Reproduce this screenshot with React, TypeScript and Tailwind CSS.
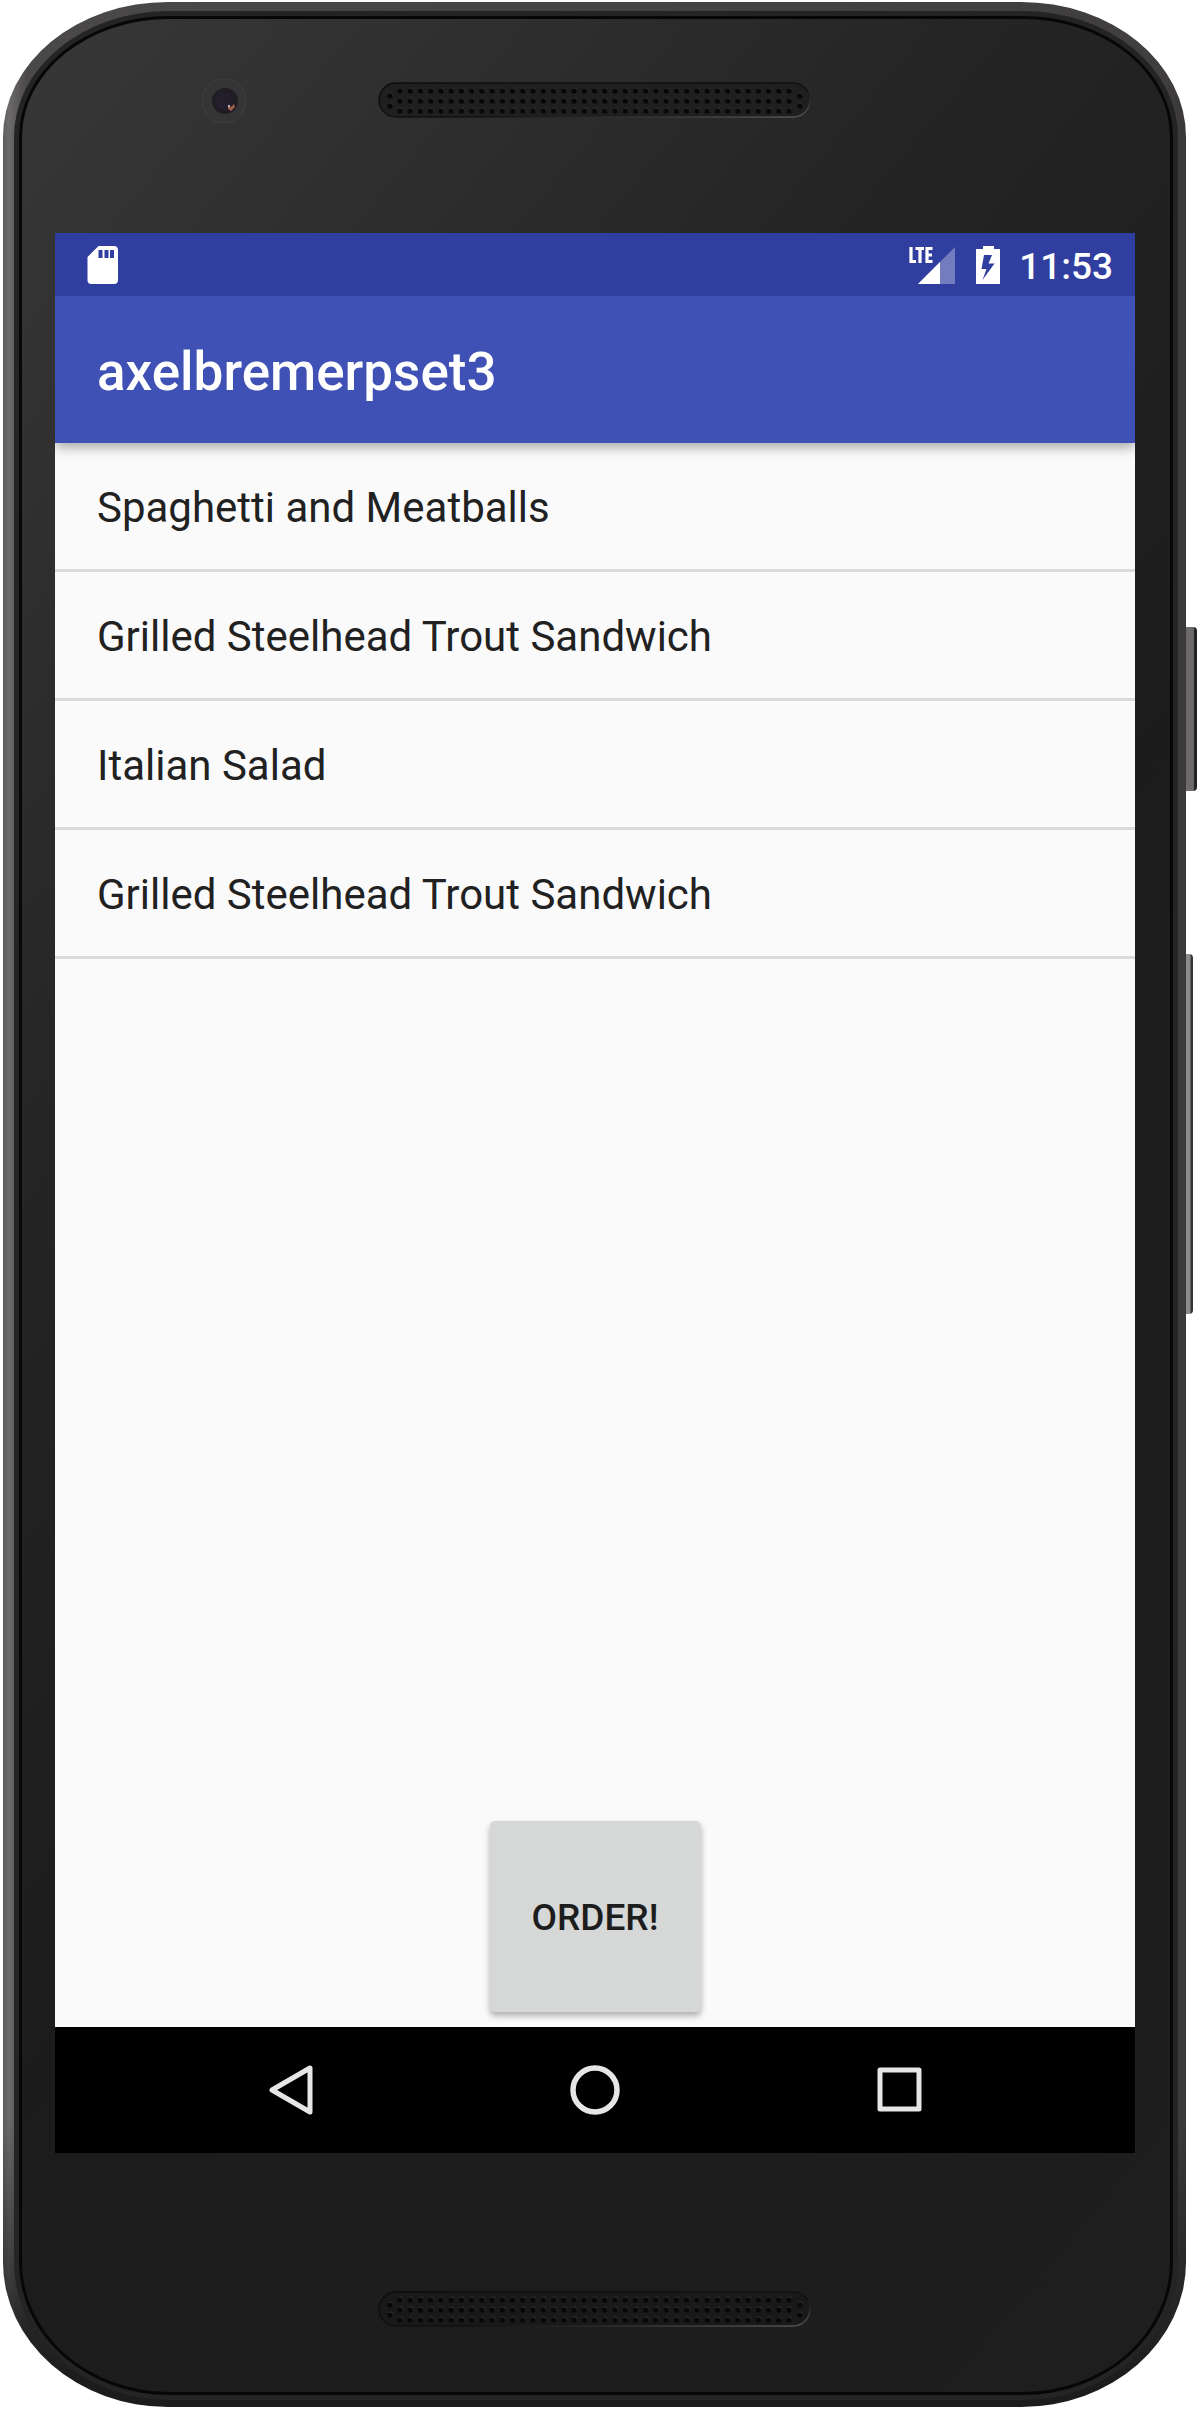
import React from "react";

const dishes = [
  "Spaghetti and Meatballs",
  "Grilled Steelhead Trout Sandwich",
  "Italian Salad",
  "Grilled Steelhead Trout Sandwich",
];

function Grille({ tone }: { tone: string }) {
  const holes: [number, number][] = [[12, 14], [12, 24], [422, 14], [422, 24]];
  for (let column = 0; column < 39; column++) {
    for (let row = 0; row < 3; row++) {
      holes.push([22 + column * 10.24, 9 + row * 10]);
    }
  }
  return (
    <svg className="h-9 w-[434px]" viewBox="0 0 434 36" aria-hidden="true">
      <defs>
        <linearGradient id={"edge" + tone.slice(1)} x1="0" y1="0" x2="1" y2="1">
          <stop offset="0" stopColor="#0c0c0c" />
          <stop offset="0.6" stopColor="#111" />
          <stop offset="1" stopColor="#555" />
        </linearGradient>
      </defs>
      <rect x="1" y="1" width="431" height="34" rx="17" fill={tone} stroke={"url(#edge" + tone.slice(1) + ")"} strokeWidth="1.5" />
      {holes.map(([x, y], i) => (
        <g key={i}>
          <circle cx={x + 0.5} cy={y - 1} r="2.5" fill="#303030" />
          <circle cx={x} cy={y} r="2.6" fill="#080808" />
        </g>
      ))}
    </svg>
  );
}

function Camera() {
  return (
    <svg className="h-12 w-12" viewBox="0 0 48 48" aria-hidden="true">
      <circle cx="24" cy="24" r="22" fill="#353535" stroke="#404040" />
      <circle cx="25" cy="24" r="13" fill="#1f1c24" />
      <circle cx="23" cy="23" r="9" fill="#231e2c" />
      <path d="M28 28l3 2 3-3 1 3-4 4-3-2z" fill="#a0604f" />
      <circle cx="29" cy="29" r="1" fill="#e0d2dc" />
    </svg>
  );
}

function StatusBar() {
  return (
    <div className="relative z-10 flex h-[63px] items-center bg-[#303f9f] pr-[22px] pl-8 text-white">
      <svg className="h-[39px] w-8" viewBox="0 0 32 39" aria-label="SD card" role="img">
        <path fillRule="evenodd" fill="#fff" d="M11.500 1H27a4 4 0 0 1 4 4V35a4 4 0 0 1-4 4H4.500a4 4 0 0 1-4-4V12zM11.500 5v8h4V5zM17.500 5v8h4V5zM23 5v8h4V5z" />
      </svg>
      <div className="ml-auto flex items-center">
        <div className="relative">
          <svg className="block h-[38px] w-[46px]" viewBox="0 0 46 38" aria-hidden="true">
            <path d="M46 1V38H9z" fill="#fff" opacity="0.32" />
            <path d="M31 16V38H9z" fill="#fff" />
          </svg>
          <svg className="absolute top-0 left-0 h-[18px] w-6" viewBox="0 0 24 18" role="img" aria-label="LTE">
            <path d="M2 1V15.500H7M6.500 2.500H15M11 2.500V17M23.500 2.500H18V15.500H23.500M18 9H23" fill="none" stroke="#fff" strokeWidth="3.2" />
          </svg>
        </div>
        <svg className="ml-[21px] h-[38px] w-6" viewBox="0 0 24 38" role="img" aria-label="Battery charging">
          <path fillRule="evenodd" fill="#fff" d="M7 0H18V3H24V38H0V3H7zM8 9L5.500 23H10.500L6.500 34L18.500 17.500H12.500L16 9z" />
        </svg>
        <time className="ml-[19px] pt-1 text-[37px] leading-none font-medium">11:53</time>
      </div>
    </div>
  );
}

function NavBar() {
  const button = "flex h-20 w-20 items-center justify-center";
  return (
    <nav className="flex h-[126px] items-center justify-center gap-56 bg-black">
      <button className={button} aria-label="Back">
        <svg className="h-14 w-14" viewBox="0 0 56 56" fill="none" stroke="#e6e6e6" strokeWidth="5" strokeLinejoin="round">
          <path d="M47 6V50L9 28z" />
        </svg>
      </button>
      <button className={button} aria-label="Home">
        <svg className="h-14 w-14" viewBox="0 0 56 56" fill="none" stroke="#e6e6e6" strokeWidth="5.500">
          <circle cx="28" cy="28" r="22" />
        </svg>
      </button>
      <button className={button} aria-label="Recent apps">
        <svg className="h-14 w-14" viewBox="0 0 56 56" fill="none" stroke="#e6e6e6" strokeWidth="5" strokeLinejoin="round">
          <rect x="9" y="8" width="39" height="39" />
        </svg>
      </button>
    </nav>
  );
}

export default function App() {
  return (
    <main className="bg-white pt-[2px] pr-3 pb-[2px] pl-[3px] font-[Roboto,sans-serif]">
      <div className="relative">
        <div className="absolute top-[625px] -right-[11px] h-[164px] w-3 rounded-r-sm bg-linear-to-r from-[#6b696b] from-70% to-[#222] to-80%" />
        <div className="absolute top-[952px] -right-[7px] h-[360px] w-2 rounded-r-sm bg-linear-to-r from-[#8b898a] from-60% to-[#333] to-80%" />
        <div className="relative rounded-t-[165px_135px] rounded-b-[165px_145px] bg-[linear-gradient(to_bottom,transparent_88%,#1c1c1c_99%),linear-gradient(to_right,#5e5c5d,#6c6a6a_6px,#4a4849_2%,#403e3f_98%,#3a3839)] pt-[9px] pr-2 pb-[7px] pl-[11px]">
          <div className="rounded-t-[155px_126px] rounded-b-[155px_138px] bg-[#242424] p-[5px]">
            <div className="rounded-t-[150px_121px] rounded-b-[150px_133px] bg-[#070707] p-[3px]">
              <div className="rounded-t-[147px_118px] rounded-b-[147px_130px] bg-[linear-gradient(130deg,#373738,#333334_8%,#242425_32%,#1c1c1d_55%,#1e1e1f)]">
                <header className="relative flex h-[214px] justify-center pt-[63px] pr-[2px]">
                  <div className="absolute top-[58px] left-[178px]">
                    <Camera />
                  </div>
                  <Grille tone="#1f1f1f" />
                </header>
                <section className="mr-[35px] ml-[33px] flex h-[1920px] flex-col overflow-hidden bg-[#fafafa]">
                  <StatusBar />
                  <div className="relative flex h-[147px] items-center bg-[#3f51b5] px-[42px] pt-[5px] shadow-[0_4px_12px_rgba(0,0,0,0.35)]">
                    <h1 className="text-[53px] leading-none font-medium text-white">axelbremerpset3</h1>
                  </div>
                  <ul>
                    {dishes.map((dish, i) => (
                      <li key={i} className="flex h-[129px] items-center border-b-[3px] border-[#dadada] px-[42px] pt-[3px] text-[42px] text-[#212121]">
                        {dish}
                      </li>
                    ))}
                  </ul>
                  <div className="mt-auto flex justify-center pb-[15px]">
                    <button className="h-[191px] w-[211px] rounded-[5px] bg-[#d6d8d7] pt-[3px] text-[37px] font-medium text-[#1d1d1d] shadow-[0_4px_6px_rgba(0,0,0,0.3)]">
                      ORDER!
                    </button>
                  </div>
                  <NavBar />
                </section>
                <footer className="flex h-[239px] justify-center pt-[138px] pr-[2px]">
                  <Grille tone="#191919" />
                </footer>
              </div>
            </div>
          </div>
        </div>
      </div>
    </main>
  );
}
